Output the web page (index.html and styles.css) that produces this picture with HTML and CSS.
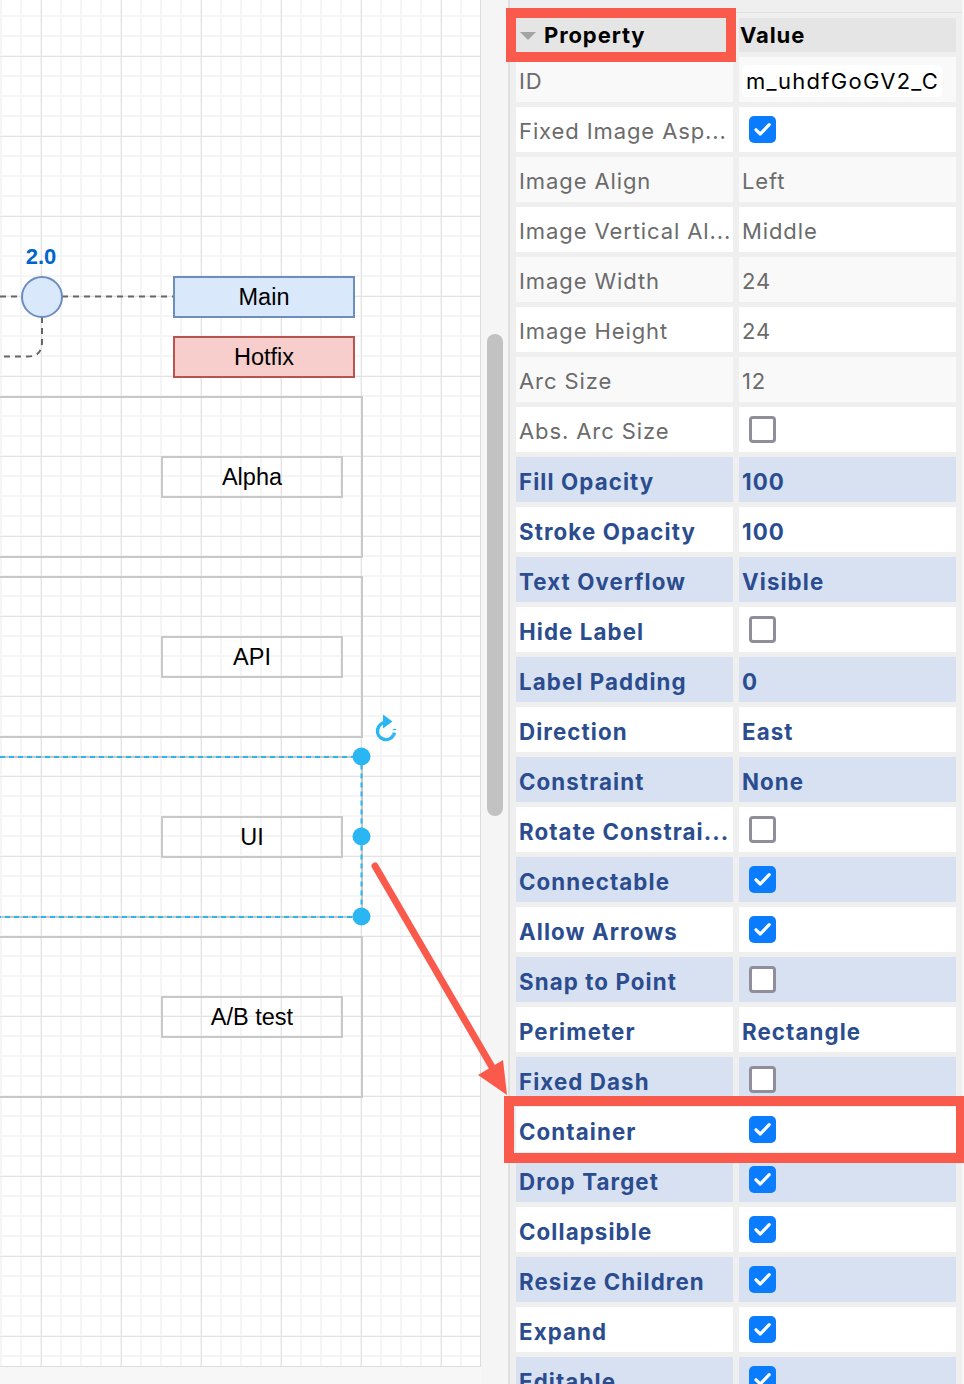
FILE: index.html
```html
<!DOCTYPE html>
<html>
<head>
<meta charset="utf-8">
<link rel="stylesheet" href="styles.css">
</head>
<body>
<div class="app">
  <div class="canvas">
    <svg class="diagram" width="480" height="1366" viewBox="0 0 480 1366">
      <g fill="none" stroke="#666" stroke-width="2" stroke-dasharray="6 5">
        <path d="M0 296.5 H22"/>
        <path d="M62 296.5 H174"/>
        <path d="M42 317 V342 Q42 356.5 28 356.5 H0"/>
      </g>
      <text x="41" y="264" class="ver">2.0</text>
      <circle cx="42" cy="297" r="20" fill="#dae8fc" stroke="#6c8ebf" stroke-width="2"/>
      <rect x="174" y="277" width="180" height="40" fill="#dae8fc" stroke="#6c8ebf" stroke-width="2"/>
      <text x="264" y="305" class="lbl">Main</text>
      <rect x="174" y="337" width="180" height="40" fill="#f8cecc" stroke="#b85450" stroke-width="2"/>
      <text x="264" y="365" class="lbl">Hotfix</text>

      <g fill="none" stroke="#c8c8c8" stroke-width="2">
        <rect x="-20" y="397" width="382" height="160"/>
        <rect x="-20" y="577" width="382" height="160"/>
        <rect x="-20" y="757" width="382" height="160"/>
        <rect x="-20" y="937" width="382" height="160"/>
        <rect x="162" y="457" width="180" height="40"/>
        <rect x="162" y="637" width="180" height="40"/>
        <rect x="162" y="817" width="180" height="40"/>
        <rect x="162" y="997" width="180" height="40"/>
      </g>
      <text x="252" y="485" class="lbl">Alpha</text>
      <text x="252" y="665" class="lbl">API</text>
      <text x="252" y="845" class="lbl">UI</text>
      <text x="252" y="1025" class="lbl">A/B test</text>

      <g fill="none" stroke="#29b6f2" stroke-width="2" stroke-dasharray="5 4">
        <path d="M0 757 H361.5 V917 H0"/>
      </g>
      <g fill="#29b6f2">
        <circle cx="361.5" cy="756.5" r="9"/>
        <circle cx="361.5" cy="836.5" r="9"/>
        <circle cx="361.5" cy="916.5" r="9"/>
      </g>
      <g fill="none" stroke="#29b6f2" stroke-width="3.5">
        <path d="M386 722.5 A8.5 8.5 0 1 0 393.5 735"/>
        <path d="M393.5 735 A8.5 8.5 0 0 0 394.5 729" stroke-dasharray="2.5 2.5"/>
      </g>
      <polygon points="383,714.5 392.5,721.5 383,728.5" fill="#29b6f2"/>
    </svg>
  </div>
  <div class="gutter"><div class="thumb"></div></div>
  <div class="panel">
    <div class="table">
      <div class="r head">
        <div class="c hp annot-head"><span class="tri"></span>Property</div>
        <div class="c">Value</div>
      </div>
      <div class="r g">
        <div class="c">ID</div>
        <div class="c cbc"><div class="input"><span>m_uhdfGoGV2_C</span></div></div>
      </div>
      <div class="r">
        <div class="c">Fixed Image Asp...</div>
        <div class="c cbc"><span class="cb"><svg width="27" height="27" viewBox="0 0 27 27"><path d="M7 13.8 L11.3 18 L20.2 8.6" fill="none" stroke="#fff" stroke-width="3.2" stroke-linecap="round" stroke-linejoin="round"/></svg></span></div>
      </div>
      <div class="r g">
        <div class="c">Image Align</div>
        <div class="c">Left</div>
      </div>
      <div class="r">
        <div class="c">Image Vertical Al...</div>
        <div class="c">Middle</div>
      </div>
      <div class="r g">
        <div class="c">Image Width</div>
        <div class="c">24</div>
      </div>
      <div class="r">
        <div class="c">Image Height</div>
        <div class="c">24</div>
      </div>
      <div class="r g">
        <div class="c">Arc Size</div>
        <div class="c">12</div>
      </div>
      <div class="r">
        <div class="c">Abs. Arc Size</div>
        <div class="c cbc"><span class="cb off"></span></div>
      </div>
      <div class="r m b">
        <div class="c">Fill Opacity</div>
        <div class="c">100</div>
      </div>
      <div class="r m">
        <div class="c">Stroke Opacity</div>
        <div class="c">100</div>
      </div>
      <div class="r m b">
        <div class="c">Text Overflow</div>
        <div class="c">Visible</div>
      </div>
      <div class="r m">
        <div class="c">Hide Label</div>
        <div class="c cbc"><span class="cb off"></span></div>
      </div>
      <div class="r m b">
        <div class="c">Label Padding</div>
        <div class="c">0</div>
      </div>
      <div class="r m">
        <div class="c">Direction</div>
        <div class="c">East</div>
      </div>
      <div class="r m b">
        <div class="c">Constraint</div>
        <div class="c">None</div>
      </div>
      <div class="r m">
        <div class="c">Rotate Constrai...</div>
        <div class="c cbc"><span class="cb off"></span></div>
      </div>
      <div class="r m b">
        <div class="c">Connectable</div>
        <div class="c cbc"><span class="cb"><svg width="27" height="27" viewBox="0 0 27 27"><path d="M7 13.8 L11.3 18 L20.2 8.6" fill="none" stroke="#fff" stroke-width="3.2" stroke-linecap="round" stroke-linejoin="round"/></svg></span></div>
      </div>
      <div class="r m">
        <div class="c">Allow Arrows</div>
        <div class="c cbc"><span class="cb"><svg width="27" height="27" viewBox="0 0 27 27"><path d="M7 13.8 L11.3 18 L20.2 8.6" fill="none" stroke="#fff" stroke-width="3.2" stroke-linecap="round" stroke-linejoin="round"/></svg></span></div>
      </div>
      <div class="r m b">
        <div class="c">Snap to Point</div>
        <div class="c cbc"><span class="cb off"></span></div>
      </div>
      <div class="r m">
        <div class="c">Perimeter</div>
        <div class="c">Rectangle</div>
      </div>
      <div class="r m b">
        <div class="c">Fixed Dash</div>
        <div class="c cbc"><span class="cb off"></span></div>
      </div>
      <div class="r m annot">
        <div class="c">Container</div>
        <div class="c cbc"><span class="cb"><svg width="27" height="27" viewBox="0 0 27 27"><path d="M7 13.8 L11.3 18 L20.2 8.6" fill="none" stroke="#fff" stroke-width="3.2" stroke-linecap="round" stroke-linejoin="round"/></svg></span></div>
      </div>
      <div class="r m b">
        <div class="c">Drop Target</div>
        <div class="c cbc"><span class="cb"><svg width="27" height="27" viewBox="0 0 27 27"><path d="M7 13.8 L11.3 18 L20.2 8.6" fill="none" stroke="#fff" stroke-width="3.2" stroke-linecap="round" stroke-linejoin="round"/></svg></span></div>
      </div>
      <div class="r m">
        <div class="c">Collapsible</div>
        <div class="c cbc"><span class="cb"><svg width="27" height="27" viewBox="0 0 27 27"><path d="M7 13.8 L11.3 18 L20.2 8.6" fill="none" stroke="#fff" stroke-width="3.2" stroke-linecap="round" stroke-linejoin="round"/></svg></span></div>
      </div>
      <div class="r m b">
        <div class="c">Resize Children</div>
        <div class="c cbc"><span class="cb"><svg width="27" height="27" viewBox="0 0 27 27"><path d="M7 13.8 L11.3 18 L20.2 8.6" fill="none" stroke="#fff" stroke-width="3.2" stroke-linecap="round" stroke-linejoin="round"/></svg></span></div>
      </div>
      <div class="r m">
        <div class="c">Expand</div>
        <div class="c cbc"><span class="cb"><svg width="27" height="27" viewBox="0 0 27 27"><path d="M7 13.8 L11.3 18 L20.2 8.6" fill="none" stroke="#fff" stroke-width="3.2" stroke-linecap="round" stroke-linejoin="round"/></svg></span></div>
      </div>
      <div class="r m b">
        <div class="c">Editable</div>
        <div class="c cbc"><span class="cb"><svg width="27" height="27" viewBox="0 0 27 27"><path d="M7 13.8 L11.3 18 L20.2 8.6" fill="none" stroke="#fff" stroke-width="3.2" stroke-linecap="round" stroke-linejoin="round"/></svg></span></div>
      </div>
    </div>
  </div>
</div>
<svg class="arrow" width="964" height="1384" viewBox="0 0 964 1384">
  <path d="M375 866 L492 1067" stroke="#fa5a4c" stroke-width="7" stroke-linecap="round" fill="none"/>
  <polygon points="507,1095 478,1075 503,1060" fill="#fa5a4c"/>
</svg>
</body>
</html>
```

FILE: styles.css
```css
html, body {
  margin: 0;
  padding: 0;
}
body {
  width: 964px;
  height: 1384px;
  overflow: hidden;
  position: relative;
  background: #f7f7f7;
  font-family: Inter, "Noto Sans", sans-serif;
}
.app {
  display: flex;
  height: 1384px;
}
.canvas {
  position: relative;
  flex: none;
  width: 480px;
  height: 1366px;
  border-right: 1px solid #dcdcdc;
  border-bottom: 1px solid #dcdcdc;
  overflow: hidden;
  background-color: #fff;
  background-image:
    linear-gradient(90deg, #e3e3e3 1px, transparent 1px),
    linear-gradient(to bottom, #e3e3e3 1px, transparent 1px),
    linear-gradient(90deg, #f5f5f5 2px, transparent 2px),
    linear-gradient(to bottom, #f5f5f5 2px, transparent 2px);
  background-size: 80px 80px, 80px 80px, 20px 20px, 20px 20px;
  background-position: 41px 0, 0 56px, 0 0, 0 15px;
}
.diagram {
  position: absolute;
  left: 0;
  top: 0;
  display: block;
}
.diagram .lbl {
  font-family: "Liberation Sans", Arial, sans-serif;
  font-size: 23.5px;
  fill: #000;
  text-anchor: middle;
}
.diagram .ver {
  font-family: "Liberation Sans", Arial, sans-serif;
  font-weight: bold;
  font-size: 22px;
  fill: #0066cc;
  text-anchor: middle;
}
.gutter {
  flex: none;
  width: 27px;
  background: #f5f5f5;
}
.thumb {
  margin: 334px 0 0 6px;
  width: 16px;
  height: 482px;
  border-radius: 8px;
  background: #c2c2c2;
}
.panel {
  flex: none;
  width: 454px;
  border-left: 2px solid #dfdfdf;
  background: #efefef;
  padding-top: 12px;
  box-sizing: border-box;
}
.table {
  border-top: 1px solid #e0e0e0;
  padding: 5px 0 0 6px;
  display: flex;
  flex-direction: column;
  gap: 5px;
}
.r {
  display: grid;
  grid-template-columns: 217px 217px;
  column-gap: 6px;
  height: 45px;
}
.c {
  background: #fff;
  padding: 2px 3px 0;
  line-height: 45px;
  font-size: 22px;
  letter-spacing: 0.9px;
  color: #6b6b6b;
  white-space: nowrap;
  overflow: hidden;
}
.r.g .c {
  background: #f9f9f9;
}
.r.m .c {
  font-weight: 700;
  font-size: 22.3px;
  letter-spacing: 1.1px;
  color: #2b4d8f;
}
.r.b .c {
  background: #d8e1f1;
}
.r.head {
  height: 34px;
}
.r.head .c {
  background: #e5e5e5;
  padding-top: 0;
  line-height: 34px;
  color: #000;
  font-weight: 700;
  overflow: visible;
}
.r.head .c + .c {
  padding-left: 1px;
}
.hp {
  position: relative;
  display: flex;
  align-items: center;
}
.tri {
  width: 0;
  height: 0;
  border-left: 8px solid transparent;
  border-right: 8px solid transparent;
  border-top: 8px solid #a3a3a3;
  margin: 2px 8px 0 1px;
}
.annot-head::after {
  content: "";
  position: absolute;
  left: -10px;
  top: -10px;
  right: -3px;
  bottom: -10px;
  border: 10px solid #fa5a4c;
}
.r.annot {
  position: relative;
  background: #fff;
}
.r.annot::after {
  content: "";
  position: absolute;
  left: -12px;
  top: -11px;
  right: -4px;
  bottom: -11px;
  border: 10px solid #fa5a4c;
}
.cbc {
  display: flex;
  align-items: center;
  padding-top: 0;
}
.input {
  height: 32px;
  width: 200px;
  margin-top: 3px;
  background: #fff;
  border-radius: 5px;
  padding: 0 4px;
  box-sizing: border-box;
  display: flex;
  align-items: center;
}
.input span {
  display: block;
  flex: none;
  width: 191px;
  overflow: hidden;
  white-space: nowrap;
  line-height: 32px;
  color: #000;
  font-weight: 400;
  letter-spacing: 1.3px;
}
.cb {
  display: block;
  width: 27px;
  height: 27px;
  margin-left: 7px;
  border-radius: 5px;
  background: #0a7cff;
  box-sizing: border-box;
}
.cb svg {
  display: block;
}
.cb.off {
  background: #fff;
  border: 3px solid #8f8e9a;
  border-radius: 4px;
}
.arrow {
  position: absolute;
  left: 0;
  top: 0;
  pointer-events: none;
}
```
